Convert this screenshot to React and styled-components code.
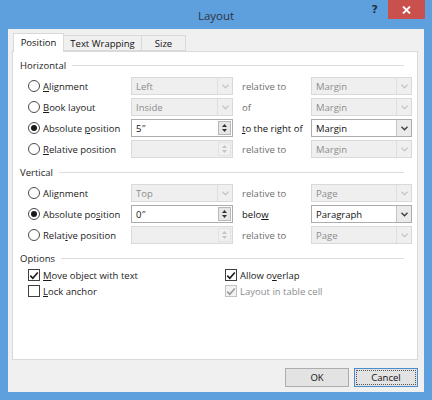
import React from 'react';
import styled, { createGlobalStyle } from 'styled-components';

const GlobalStyle = createGlobalStyle`
  html, body {
    margin: 0;
    padding: 0;
  }
  body {
    font-family: "Open Sans", "Noto Sans", sans-serif;
    font-size: 9.5px;
    color: #1b1b1b;
    background: #5e9fdd;
  }
`;

const Window = styled.div`
  width: 432px;
  height: 400px;
  box-sizing: border-box;
  background: #5e9fdd;
  padding: 0 8px 8px 8px;
  display: flex;
  flex-direction: column;
`;

const TitleBar = styled.div`
  height: 29px;
  display: grid;
  grid-template-columns: 1fr auto 1fr;
  align-items: center;
`;

const Title = styled.div`
  font-size: 11.5px;
  color: #2e3440;
  padding-top: 1px;
`;

const Controls = styled.div`
  justify-self: end;
  align-self: start;
  display: flex;
  align-items: flex-start;
  margin-right: -1px;
`;

const HelpMark = styled.span`
  font-family: "DejaVu Sans", sans-serif;
  font-weight: bold;
  font-size: 11px;
  color: #26313d;
  margin: 3px 10px 0 0;
`;

const CloseButton = styled.div`
  width: 37px;
  height: 19px;
  background: #c9504d;
  display: flex;
  align-items: center;
  justify-content: center;
`;

const Client = styled.div`
  flex: 1;
  background: #f0f0f0;
  padding: 4px 6px 0 4px;
  display: flex;
  flex-direction: column;
`;

const TabStrip = styled.div`
  height: 18px;
  display: flex;
  align-items: flex-end;
  padding-left: 1px;
`;

const Tab = styled.div`
  position: relative;
  z-index: 1;
  box-sizing: border-box;
  width: ${(p) => p.w}px;
  height: ${(p) => (p.active ? 19 : 16)}px;
  margin-bottom: ${(p) => (p.active ? -1 : 0)}px;
  margin-left: ${(p) => (p.active ? 0 : -1)}px;
  background: ${(p) => (p.active ? '#ffffff' : '#f0f0f0')};
  border: 1px solid #d9d9d9;
  border-bottom: ${(p) => (p.active ? 'none' : '1px solid #d9d9d9')};
  display: flex;
  align-items: center;
  justify-content: center;
  color: #111;
  padding-bottom: ${(p) => (p.active ? 1 : 0)}px;
`;

const Panel = styled.div`
  flex: 1;
  background: #ffffff;
  border: 1px solid #d9d9d9;
  padding: 6px 13px 0 7px;
`;

const Section = styled.div`
  & + & {
    margin-top: 7px;
  }
`;

const GroupHeader = styled.div`
  height: 14px;
  display: flex;
  align-items: center;
  gap: 6px;
  margin-bottom: ${(p) => p.mb ?? 5}px;
  color: #1b1b1b;

  &::after {
    content: '';
    flex: 1;
    height: 1px;
    background: #dcdcdc;
  }
`;

const RowGrid = styled.div`
  margin-left: 8px;
  display: grid;
  grid-template-columns: 103px 102px 78px 101px;
  grid-auto-rows: 18px;
  row-gap: 3px;
  align-items: center;
`;

const RadioLabel = styled.label`
  display: flex;
  align-items: center;
  gap: 3px;
  color: #1b1b1b;
  white-space: nowrap;
`;

const RadioCircle = styled.span`
  width: 12px;
  height: 12px;
  box-sizing: border-box;
  border-radius: 50%;
  border: 1px solid #4a4a4a;
  background: #fff;
  display: flex;
  align-items: center;
  justify-content: center;

  &::after {
    content: '';
    width: 6px;
    height: 6px;
    border-radius: 50%;
    background: ${(p) => (p.checked ? '#1a1a1a' : 'transparent')};
  }
`;

const Key = styled.span`
  text-decoration: underline;
  text-underline-offset: 1px;
`;

const Field = styled.div`
  height: 18px;
  box-sizing: border-box;
  display: flex;
  border: 1px solid ${(p) => (p.disabled ? '#d9d9d9' : '#acacac')};
  background: ${(p) => (p.disabled ? '#efefef' : '#ffffff')};
  color: ${(p) => (p.disabled ? '#8d8d8d' : '#111')};
`;

const FieldText = styled.span`
  flex: 1;
  display: flex;
  align-items: center;
  padding-left: 4px;
`;

const ArrowCell = styled.span`
  width: 15px;
  box-sizing: border-box;
  border-left: 1px solid ${(p) => (p.disabled ? '#dedede' : '#c4c4c4')};
  background: ${(p) => (p.disabled ? '#efefef' : '#ebebeb')};
  display: flex;
  align-items: center;
  justify-content: center;
`;

const SpinCell = styled.span`
  width: 13px;
  box-sizing: border-box;
  margin: 1px;
  border: 1px solid ${(p) => (p.disabled ? '#e2e2e2' : '#b9b9b9')};
  background: ${(p) => (p.disabled ? '#f0f0f0' : '#e6e6e6')};
  display: flex;
  flex-direction: column;
  align-items: center;
  justify-content: space-evenly;
`;

const RelLabel = styled.span`
  padding-left: 9px;
  color: ${(p) => (p.disabled ? '#6e6e6e' : '#111')};
  white-space: nowrap;
`;

const CheckGrid = styled.div`
  margin-left: 8px;
  display: grid;
  grid-template-columns: 197px 1fr;
  grid-auto-rows: 14px;
  row-gap: 2px;
  align-items: center;
`;

const CheckLabel = styled.label`
  display: flex;
  align-items: center;
  gap: 3px;
  color: ${(p) => (p.disabled ? '#8d8d8d' : '#1b1b1b')};
  white-space: nowrap;
`;

const CheckBox = styled.span`
  width: 12px;
  height: 12px;
  box-sizing: border-box;
  border: 1px solid ${(p) => (p.disabled ? '#c2c2c2' : '#3f3f3f')};
  background: ${(p) => (p.disabled ? '#f2f2f2' : '#ffffff')};
  display: flex;
  align-items: center;
  justify-content: center;
`;

const ButtonRow = styled.div`
  display: flex;
  justify-content: flex-end;
  gap: 5px;
  padding: 8px 0 5px;
`;

const Button = styled.div`
  width: 64px;
  height: 19px;
  box-sizing: border-box;
  border: 1px solid ${(p) => (p.primary ? '#4a8ccc' : '#adadad')};
  background: #e3e3e3;
  display: flex;
  align-items: center;
  justify-content: center;
  padding: 2px;
  color: #111;
`;

const FocusRing = styled.span`
  flex: 1;
  align-self: stretch;
  display: flex;
  align-items: center;
  justify-content: center;
  outline: ${(p) => (p.focused ? '1px dotted #555' : 'none')};
`;

const Chevron = ({ disabled }) => (
  <svg width="7" height="5" viewBox="0 0 7 5">
    <path
      d="M0.5 0.8 L3.5 3.8 L6.5 0.8"
      fill="none"
      stroke={disabled ? '#c6c6c6' : '#3a3a3a'}
      strokeWidth="1.3"
    />
  </svg>
);

const Tri = ({ up, disabled }) => (
  <svg width="5" height="3" viewBox="0 0 5 3">
    <path d={up ? 'M0 3 L2.5 0 L5 3 Z' : 'M0 0 L2.5 3 L5 0 Z'} fill={disabled ? '#c4c4c4' : '#333'} />
  </svg>
);

const Tick = ({ disabled }) => (
  <svg width="10" height="9" viewBox="0 0 10 9">
    <path
      d="M1.3 4.6 L3.8 7.2 L8.8 1.4"
      fill="none"
      stroke={disabled ? '#9a9a9a' : '#1a1a1a'}
      strokeWidth="1.6"
    />
  </svg>
);

const Combo = ({ value, disabled }) => (
  <Field disabled={disabled}>
    <FieldText>{value}</FieldText>
    <ArrowCell disabled={disabled}>
      <Chevron disabled={disabled} />
    </ArrowCell>
  </Field>
);

const Spinner = ({ value, disabled }) => (
  <Field disabled={disabled}>
    <FieldText>{value}</FieldText>
    <SpinCell disabled={disabled}>
      <Tri up disabled={disabled} />
      <Tri disabled={disabled} />
    </SpinCell>
  </Field>
);

const Radio = ({ checked, children }) => (
  <RadioLabel>
    <RadioCircle checked={checked} />
    <span>{children}</span>
  </RadioLabel>
);

const Check = ({ checked, disabled, children }) => (
  <CheckLabel disabled={disabled}>
    <CheckBox disabled={disabled}>{checked && <Tick disabled={disabled} />}</CheckBox>
    <span>{children}</span>
  </CheckLabel>
);

const App = () => (
  <>
    <GlobalStyle />
    <Window>
      <TitleBar>
        <div />
        <Title>Layout</Title>
        <Controls>
          <HelpMark>?</HelpMark>
          <CloseButton>
            <svg width="9" height="8" viewBox="0 0 9 8">
              <path d="M1 0.5 L8 7.5 M8 0.5 L1 7.5" stroke="#fff" strokeWidth="1.8" />
            </svg>
          </CloseButton>
        </Controls>
      </TitleBar>
      <Client>
        <TabStrip>
          <Tab active w={51}>Position</Tab>
          <Tab w={79}>Text Wrapping</Tab>
          <Tab w={45}>Size</Tab>
        </TabStrip>
        <Panel>
          <Section>
            <GroupHeader>Horizontal</GroupHeader>
            <RowGrid>
              <Radio><Key>A</Key>lignment</Radio>
              <Combo value="Left" disabled />
              <RelLabel disabled>relative to</RelLabel>
              <Combo value="Margin" disabled />

              <Radio><Key>B</Key>ook layout</Radio>
              <Combo value="Inside" disabled />
              <RelLabel disabled>of</RelLabel>
              <Combo value="Margin" disabled />

              <Radio checked>Absolute <Key>p</Key>osition</Radio>
              <Spinner value="5″" />
              <RelLabel><Key>t</Key>o the right of</RelLabel>
              <Combo value="Margin" />

              <Radio><Key>R</Key>elative position</Radio>
              <Spinner value="" disabled />
              <RelLabel disabled>relative to</RelLabel>
              <Combo value="Margin" disabled />
            </RowGrid>
          </Section>
          <Section>
            <GroupHeader>Vertical</GroupHeader>
            <RowGrid>
              <Radio>Ali<Key>g</Key>nment</Radio>
              <Combo value="Top" disabled />
              <RelLabel disabled>relative to</RelLabel>
              <Combo value="Page" disabled />

              <Radio checked>Absolute po<Key>s</Key>ition</Radio>
              <Spinner value="0″" />
              <RelLabel>belo<Key>w</Key></RelLabel>
              <Combo value="Paragraph" />

              <Radio>Relat<Key>i</Key>ve position</Radio>
              <Spinner value="" disabled />
              <RelLabel disabled>relative to</RelLabel>
              <Combo value="Page" disabled />
            </RowGrid>
          </Section>
          <Section>
            <GroupHeader mb={3}>Options</GroupHeader>
            <CheckGrid>
              <Check checked><Key>M</Key>ove object with text</Check>
              <Check checked>Allow o<Key>v</Key>erlap</Check>
              <Check><Key>L</Key>ock anchor</Check>
              <Check checked disabled>Layout in table cell</Check>
            </CheckGrid>
          </Section>
        </Panel>
        <ButtonRow>
          <Button><FocusRing>OK</FocusRing></Button>
          <Button primary><FocusRing focused>Cancel</FocusRing></Button>
        </ButtonRow>
      </Client>
    </Window>
  </>
);

export default App;
